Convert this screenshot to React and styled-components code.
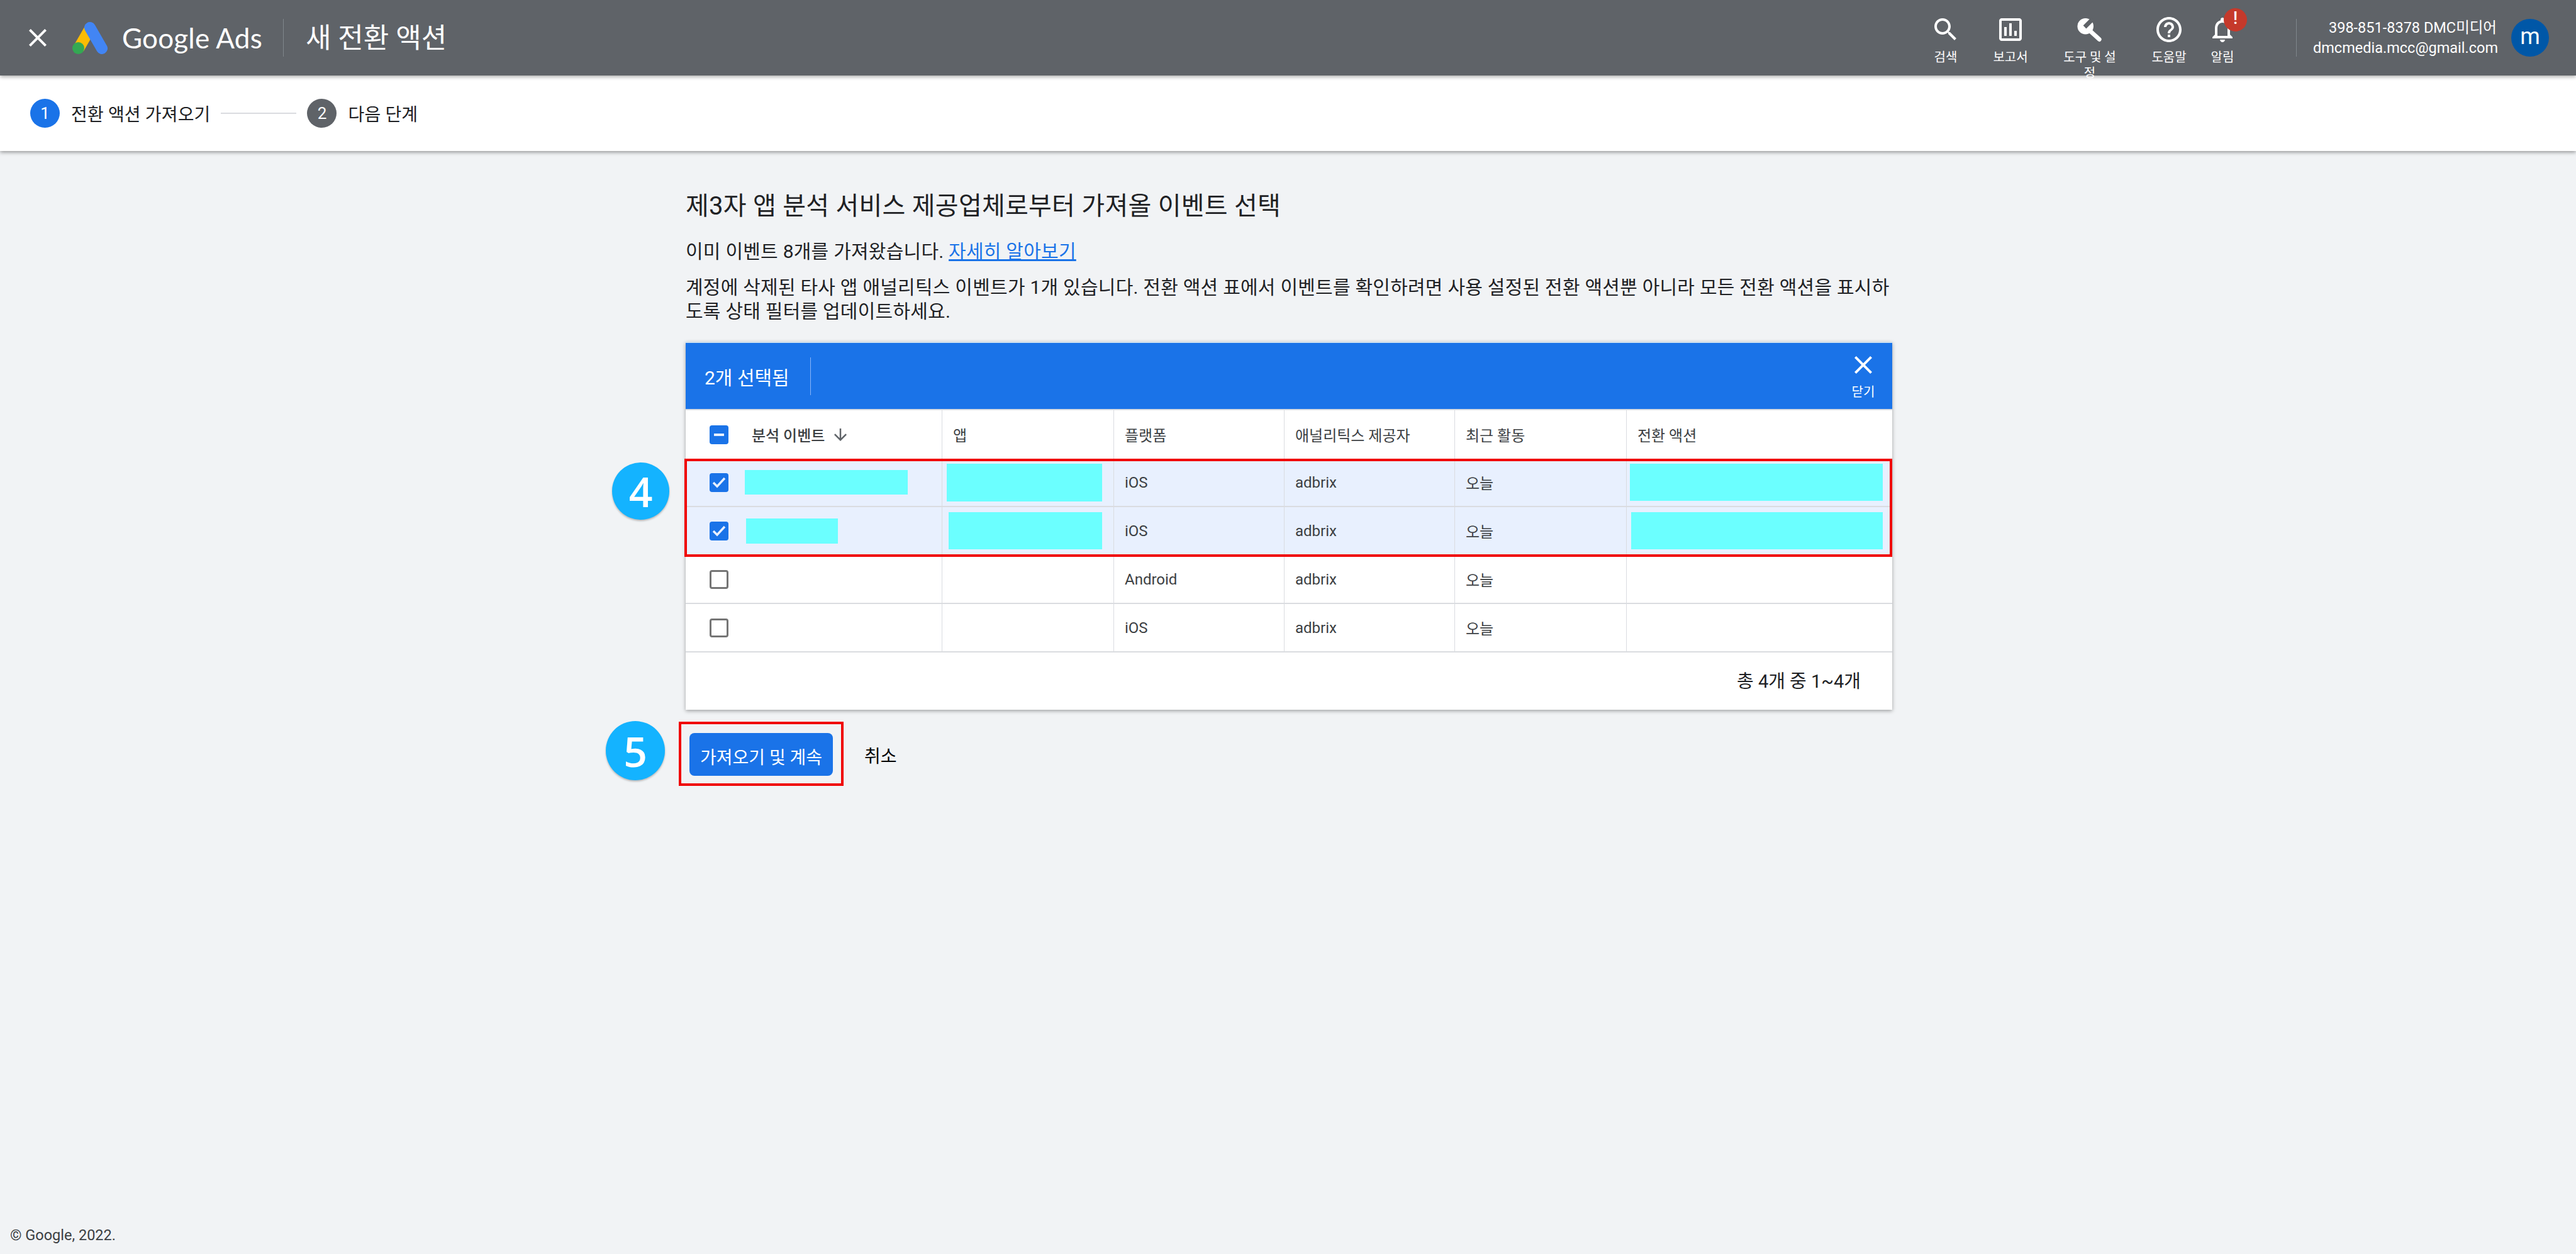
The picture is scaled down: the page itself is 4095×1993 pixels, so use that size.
import React from 'react';
import styled, { createGlobalStyle } from 'styled-components';

const paths = {
  close: 'M19 6.41L17.59 5 12 10.59 6.41 5 5 6.41 10.59 12 5 17.59 6.41 19 12 13.41 17.59 19 19 17.59 13.41 12z',
  search: 'M15.5 14h-.79l-.28-.27C15.41 12.59 16 11.11 16 9.5 16 5.91 13.09 3 9.5 3S3 5.91 3 9.5 5.91 16 9.5 16c1.61 0 3.09-.59 4.23-1.57l.27.28v.79l5 4.99L20.49 19l-4.99-5zm-6 0C7.01 14 5 11.99 5 9.5S7.01 5 9.5 5 14 7.01 14 9.5 11.99 14 9.5 14z',
  report: 'M19 3H5c-1.1 0-2 .9-2 2v14c0 1.1.9 2 2 2h14c1.1 0 2-.9 2-2V5c0-1.1-.9-2-2-2zm0 16H5V5h14v14zM7 10h2v7H7zm4-3h2v10h-2zm4 6h2v4h-2z',
  help: 'M11 18h2v-2h-2v2zm1-16C6.48 2 2 6.48 2 12s4.48 10 10 10 10-4.48 10-10S17.52 2 12 2zm0 18c-4.41 0-8-3.59-8-8s3.59-8 8-8 8 3.59 8 8-3.59 8-8 8zm0-14c-2.21 0-4 1.79-4 4h2c0-1.1.9-2 2-2s2 .9 2 2c0 2-3 1.75-3 5h2c0-2.25 3-2.5 3-5 0-2.21-1.79-4-4-4z',
  bell: 'M12 22c1.1 0 2-.9 2-2h-4c0 1.1.9 2 2 2zm6-6v-5c0-3.07-1.63-5.64-4.5-6.32V4c0-.83-.67-1.5-1.5-1.5s-1.5.67-1.5 1.5v.68C7.64 5.36 6 7.92 6 11v5l-2 2v1h16v-1l-2-2zm-2 1H8v-6c0-2.48 1.51-4.5 4-4.5s4 2.02 4 4.5v6z',
  down: 'M20 12l-1.41-1.41L13 16.17V4h-2v12.17l-5.58-5.59L4 12l8 8 8-8z',
};

const navItems = [
  { label: '검색', icon: 'search', width: 100 },
  { label: '보고서', icon: 'report', width: 106 },
  { label: '도구 및 설정', icon: 'tools', width: 146 },
  { label: '도움말', icon: 'help', width: 106 },
  { label: '알림', icon: 'bell', width: 64, badge: true },
];

const columns = ['분석 이벤트', '앱', '플랫폼', '애널리틱스 제공자', '최근 활동', '전환 액션'];

const rows = [
  { platform: 'iOS', checked: true, name: { ml: 26, w: 259, h: 39 }, app: { ml: 7, w: 247, h: 60 }, action: { ml: 5, w: 402, h: 59 } },
  { platform: 'iOS', checked: true, name: { ml: 28, w: 146, h: 40 }, app: { ml: 10, w: 244, h: 59 }, action: { ml: 7, w: 400, h: 59 } },
  { platform: 'Android' },
  { platform: 'iOS' },
];

// open-end wrench, the material "build" glyph does not have the jaw of the reference
const WrenchIcon = () => (
  <svg width="48" height="48" viewBox="0 0 24 24">
    <circle cx="8.6" cy="9.4" r="6.4" fill="#fff" />
    <line x1="10" y1="11" x2="19.6" y2="19.8" stroke="#fff" strokeWidth="3.4" strokeLinecap="round" />
    <line x1="8" y1="10" x2="14.5" y2="3.5" stroke="#5f6368" strokeWidth="3.4" />
  </svg>
);

const Icon = ({ name, size = 48, color = '#fff' }) =>
  name === 'tools' ? (
    <WrenchIcon />
  ) : (
    <svg width={size} height={size} viewBox="0 0 24 24" fill={color}>
      <path d={paths[name]} />
    </svg>
  );

const AdsLogo = () => (
  <svg width="56" height="51" viewBox="0 0 56 51">
    <line x1="29" y1="9" x2="10" y2="42" stroke="#fbbc04" strokeWidth="18" />
    <line x1="28" y1="9" x2="47" y2="42" stroke="#4285f4" strokeWidth="18" strokeLinecap="round" />
    <circle cx="9.5" cy="41.5" r="9.5" fill="#34a853" />
  </svg>
);

const Check = ({ state }) => (
  <CheckBox $on={!!state}>
    {state === 'checked' && (
      <svg width="30" height="30" viewBox="0 0 30 30" fill="none" stroke="#e8f0fe" strokeWidth="3.5">
        <path d="M6 15l6 6L24 8" />
      </svg>
    )}
    {state === 'mixed' && (
      <svg width="30" height="30" viewBox="0 0 30 30" fill="none" stroke="#e8f0fe" strokeWidth="4">
        <path d="M7 15h16" />
      </svg>
    )}
  </CheckBox>
);

export default function App() {
  return (
    <Page>
      <GlobalStyle />
      <TopBar>
        <Icon name="close" />
        <LogoWrap><AdsLogo /></LogoWrap>
        <Wordmark>Google Ads</Wordmark>
        <BarDivider $ml={33} />
        <BarTitle>새 전환 액션</BarTitle>
        <NavList>
          {navItems.map(item => (
            <NavItem key={item.label} $w={item.width}>
              <Icon name={item.icon} />
              {item.badge && <Badge>!</Badge>}
              <NavLabel>{item.label}</NavLabel>
            </NavItem>
          ))}
        </NavList>
        <BarDivider $ml={85} />
        <Account>
          <div>398-851-8378 DMC미디어</div>
          <div>dmcmedia.mcc@gmail.com</div>
        </Account>
        <Avatar>m</Avatar>
      </TopBar>
      <StepsBar>
        <StepDot $active>1</StepDot>
        <StepLabel>전환 액션 가져오기</StepLabel>
        <StepLine />
        <StepDot>2</StepDot>
        <StepLabel>다음 단계</StepLabel>
      </StepsBar>
      <Main>
        <Title>제3자 앱 분석 서비스 제공업체로부터 가져올 이벤트 선택</Title>
        <Intro>이미 이벤트 8개를 가져왔습니다. <a href="#more">자세히 알아보기</a></Intro>
        <Notice>계정에 삭제된 타사 앱 애널리틱스 이벤트가 1개 있습니다. 전환 액션 표에서 이벤트를 확인하려면 사용 설정된 전환 액션뿐 아니라 모든 전환 액션을 표시하도록 상태 필터를 업데이트하세요.</Notice>
        <Card>
          <SelectionBar>
            <SelectionCount>2개 선택됨</SelectionCount>
            <SelectionDivider />
            <CloseAction>
              <Icon name="close" />
              <span>닫기</span>
            </CloseAction>
          </SelectionBar>
          <HeaderRow>
            {columns.map((col, i) => (
              <HeadCell key={col} $first={i === 0}>
                {i === 0 && <Check state="mixed" />}
                {i === 0 ? (
                  <SortLabel>
                    {col}
                    <Icon name="down" size={30} color="#5f6368" />
                  </SortLabel>
                ) : col}
              </HeadCell>
            ))}
          </HeaderRow>
          {rows.map((row, i) => (
            <Row key={i} $selected={row.checked}>
              <Cell $first>
                <Check state={row.checked ? 'checked' : null} />
                {row.name && <Redact $ml={row.name.ml} $w={row.name.w} $h={row.name.h} />}
              </Cell>
              <Cell $flush>
                {row.app && <Redact $ml={row.app.ml} $w={row.app.w} $h={row.app.h} />}
              </Cell>
              <Cell>{row.platform}</Cell>
              <Cell>adbrix</Cell>
              <Cell>오늘</Cell>
              <Cell $flush>
                {row.action && <Redact $ml={row.action.ml} $w={row.action.w} $h={row.action.h} />}
              </Cell>
            </Row>
          ))}
          <Pagination>총 4개 중 1~4개</Pagination>
          <RowsHighlight />
          <Marker $left={-117} $top={190} $size={91}>4</Marker>
        </Card>
        <Actions>
          <ButtonHighlight>
            <PrimaryButton>가져오기 및 계속</PrimaryButton>
            <Marker $left={-120} $top={-5} $size={94}>5</Marker>
          </ButtonHighlight>
          <CancelButton>취소</CancelButton>
        </Actions>
      </Main>
      <Footer>© Google, 2022.</Footer>
    </Page>
  );
}

const GlobalStyle = createGlobalStyle`
  body {
    margin: 0;
    background: #f1f3f5;
    color: #202124;
    font-family: Roboto, "Noto Sans CJK KR", sans-serif;
  }
`;

const Page = styled.div`
  display: flex;
  flex-direction: column;
  min-height: 1993px;
`;

const TopBar = styled.header`
  position: relative;
  z-index: 2;
  display: flex;
  align-items: center;
  height: 120px;
  padding: 0 43px 0 36px;
  background: #5f6368;
  color: #fff;
  box-shadow: 0 2px 6px rgba(0, 0, 0, 0.35);
`;

const LogoWrap = styled.div`
  display: flex;
  margin-left: 31px;
`;

const Wordmark = styled.div`
  margin-left: 23px;
  font-family: Lato, sans-serif;
  font-size: 44px;
  letter-spacing: 0.2px;
`;

const BarDivider = styled.div`
  width: 1px;
  height: 60px;
  margin-left: ${p => p.$ml}px;
  background: #80868b;
`;

const BarTitle = styled.div`
  margin: 0 0 6px 35px;
  font-size: 44px;
`;

const NavList = styled.nav`
  display: flex;
  align-self: flex-start;
  margin-left: auto;
  padding-top: 23px;
`;

const NavItem = styled.div`
  position: relative;
  display: flex;
  flex-direction: column;
  align-items: center;
  width: ${p => p.$w}px;
  svg {
    flex: none;
  }
`;

const NavLabel = styled.div`
  width: 92px;
  margin-top: 8px;
  font-size: 20px;
  line-height: 25px;
  text-align: center;
`;

const Badge = styled.div`
  position: absolute;
  top: -10px;
  left: 34px;
  width: 37px;
  height: 37px;
  border-radius: 50%;
  background: #c5392b;
  font-size: 27px;
  font-weight: 500;
  line-height: 33px;
  text-align: center;
`;

const Account = styled.div`
  width: 292px;
  margin-left: 26px;
  font-size: 23.5px;
  line-height: 32px;
  text-align: right;
  white-space: nowrap;
`;

const Avatar = styled.div`
  width: 60px;
  height: 60px;
  margin-left: 23px;
  border-radius: 50%;
  background: #0057a7;
  font-size: 36px;
  line-height: 56px;
  text-align: center;
`;

const StepsBar = styled.div`
  position: relative;
  z-index: 1;
  display: flex;
  align-items: center;
  height: 120px;
  padding-left: 48px;
  background: #fff;
  box-shadow: 0 2px 6px rgba(0, 0, 0, 0.4);
`;

const StepDot = styled.div`
  width: 47px;
  height: 46px;
  border-radius: 50%;
  background: ${p => (p.$active ? '#1a73e8' : '#5f6368')};
  color: #fff;
  font-size: 26px;
  line-height: 46px;
  text-align: center;
`;

const StepLabel = styled.div`
  margin-left: 18px;
  font-size: 28px;
  letter-spacing: 0.15px;
`;

const StepLine = styled.div`
  width: 120px;
  height: 2px;
  margin: 0 17px;
  background: #dadce0;
`;

const Main = styled.main`
  width: 1918px;
  margin-left: 1090px;
  padding-top: 64px;
`;

const Title = styled.h1`
  margin: 0;
  font-size: 40px;
  font-weight: 400;
  letter-spacing: 0.25px;
  line-height: 48px;
`;

const Intro = styled.p`
  margin: 29px 0 0;
  font-size: 30px;
  letter-spacing: 0.25px;
  line-height: 38px;
  a {
    color: #1a73e8;
  }
`;

const Notice = styled.p`
  margin: 19px 0 0;
  font-size: 30px;
  letter-spacing: 0.25px;
  line-height: 38px;
`;

const Card = styled.section`
  position: relative;
  margin-top: 29px;
  background: #fff;
  border-top: 2px solid #d2e3f0;
  box-shadow: 0 2px 6px rgba(0, 0, 0, 0.35);
`;

const SelectionBar = styled.div`
  display: flex;
  align-items: center;
  height: 105px;
  padding-left: 30px;
  background: #1a73e8;
  color: #fff;
`;

const SelectionCount = styled.div`
  font-size: 30px;
`;

const SelectionDivider = styled.div`
  width: 1px;
  height: 60px;
  margin-left: 33px;
  background: #8ab4f8;
`;

const CloseAction = styled.div`
  display: flex;
  flex-direction: column;
  align-items: center;
  align-self: flex-start;
  margin: 11px 22px 0 auto;
  font-size: 20px;
  line-height: 24px;
  span {
    margin-top: 7px;
  }
`;

const tableGrid = styled.div`
  display: grid;
  grid-template-columns: 408px 273px 271px 271px 273px 422px;
`;

const HeaderRow = styled(tableGrid)`
  height: 79px;
  border-top: 2px solid #dadce0;
  box-sizing: border-box;
`;

const Row = styled(tableGrid)`
  height: 77px;
  box-sizing: border-box;
  border-bottom: 2px solid #dadce0;
  background: ${p => (p.$selected ? '#e8f0fe' : '#fff')};
`;

const Cell = styled.div`
  display: flex;
  align-items: center;
  padding-left: ${p => (p.$first ? '38px' : p.$flush ? '0' : '17px')};
  border-right: 1px solid #dadce0;
  color: #3c4043;
  font-size: 24px;
  &:last-child {
    border-right: 0;
  }
`;

const HeadCell = styled(Cell)`
  font-size: 24px;
  font-weight: ${p => (p.$first ? 500 : 400)};
`;

const SortLabel = styled.div`
  display: flex;
  align-items: center;
  gap: 10px;
  margin-left: 37px;
`;

const CheckBox = styled.div`
  flex: none;
  width: 30px;
  height: 30px;
  box-sizing: border-box;
  border-radius: 4px;
  border: ${p => (p.$on ? '0' : '3px solid #757575')};
  background: ${p => (p.$on ? '#1a73e8' : '#fff')};
  svg {
    display: block;
  }
`;

const Redact = styled.div`
  flex: none;
  width: ${p => p.$w}px;
  height: ${p => p.$h}px;
  margin-left: ${p => p.$ml}px;
  background: #6bffff;
`;

const Pagination = styled.div`
  height: 91px;
  padding-right: 50px;
  font-size: 29px;
  line-height: 93px;
  text-align: right;
`;

const RowsHighlight = styled.div`
  position: absolute;
  top: 184px;
  left: -2px;
  right: 0;
  height: 156px;
  box-sizing: border-box;
  border: 4px solid #f00000;
  pointer-events: none;
`;

const Marker = styled.div`
  position: absolute;
  top: ${p => p.$top}px;
  left: ${p => p.$left}px;
  width: ${p => p.$size}px;
  height: ${p => p.$size}px;
  border-radius: 50%;
  background: #14b3ff;
  box-shadow: 0 2px 3px rgba(0, 0, 0, 0.25);
  color: #fff;
  font-family: "Open Sans", sans-serif;
  font-size: 66px;
  font-weight: 600;
  line-height: ${p => p.$size}px;
  text-align: center;
`;

const Actions = styled.div`
  display: flex;
  align-items: center;
  margin: 19px 0 0 -11px;
`;

const ButtonHighlight = styled.div`
  position: relative;
  padding: 14px 13px 12px;
  border: 4px solid #f00000;
`;

const PrimaryButton = styled.button`
  display: block;
  width: 228px;
  height: 68px;
  padding: 5px 0 0;
  border: 0;
  border-radius: 8px;
  background: #1a73e8;
  color: #fff;
  font: inherit;
  font-size: 28px;
`;

const CancelButton = styled.button`
  margin: 4px 0 0 33px;
  padding: 0;
  border: 0;
  background: none;
  color: #000;
  font: inherit;
  font-size: 28px;
`;

const Footer = styled.footer`
  margin-top: auto;
  padding: 0 0 16px 16px;
  color: #3c4043;
  font-size: 23.5px;
  line-height: 28px;
`;
